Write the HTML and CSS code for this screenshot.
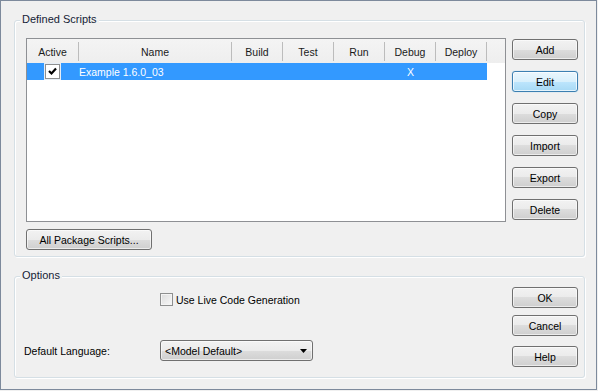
FILE: index.html
```html
<!DOCTYPE html>
<html lang="en">
<head>
    <meta charset="UTF-8">
    <meta name="viewport" content="width=device-width, initial-scale=1.0">
    <title>Scripts</title>
    <link rel="stylesheet" href="styles.css">
</head>
<body>
    <div class="dialog">
        <div class="group group-scripts">
            <span class="legend">Defined Scripts</span>
            <div class="scripts-body">
                <div class="scripts-main">
                    <div class="list">
                        <div class="list-head">
                            <div class="col">Active</div>
                            <div class="col">Name</div>
                            <div class="col">Build</div>
                            <div class="col">Test</div>
                            <div class="col">Run</div>
                            <div class="col">Debug</div>
                            <div class="col">Deploy</div>
                            <div class="col col-fill"></div>
                        </div>
                        <div class="list-row selected">
                            <div class="cell cell-center">
                                <span class="row-check">
                                    <svg width="9" height="9" viewBox="0 0 9 9"><path d="M1 4 L3.5 6.5 L8 1.5" fill="none" stroke="#000" stroke-width="2.2"/></svg>
                                </span>
                            </div>
                            <div class="cell cell-name">Example 1.6.0_03</div>
                            <div class="cell"></div>
                            <div class="cell"></div>
                            <div class="cell"></div>
                            <div class="cell cell-center">X</div>
                            <div class="cell"></div>
                        </div>
                    </div>
                    <button class="btn btn-wide">All Package Scripts...</button>
                </div>
                <div class="side-buttons">
                    <button class="btn">Add</button>
                    <button class="btn btn-default">Edit</button>
                    <button class="btn">Copy</button>
                    <button class="btn">Import</button>
                    <button class="btn">Export</button>
                    <button class="btn">Delete</button>
                </div>
            </div>
        </div>

        <div class="group group-options">
            <span class="legend">Options</span>
            <div class="options-body">
                <div class="options-main">
                    <label class="check-row">
                        <span class="check-box"></span>
                        <span>Use Live Code Generation</span>
                    </label>
                    <div class="lang-row">
                        <span class="lang-label">Default Language:</span>
                        <div class="combo">
                            <span>&lt;Model Default&gt;</span>
                            <svg class="combo-arrow" width="7" height="4" viewBox="0 0 7 4"><path d="M0 0 H7 L3.5 4 Z" fill="#000"/></svg>
                        </div>
                    </div>
                </div>
                <div class="side-buttons side-buttons-dialog">
                    <button class="btn">OK</button>
                    <button class="btn btn-cancel">Cancel</button>
                    <button class="btn btn-help">Help</button>
                </div>
            </div>
        </div>
    </div>
</body>
</html>
```

FILE: styles.css
```css
body {
    margin: 0;
    background-color: #f0f0f0;
    font-family: "Liberation Sans", Arial, sans-serif;
    font-size: 10.5px;
    color: #000000;
}
.dialog {
    box-sizing: border-box;
    width: 597px;
    height: 390px;
    border: 1px solid #7d8a9c;
    padding: 19px 0 0 13px;
    background-color: #f0f0f0;
}
.group {
    position: relative;
    box-sizing: border-box;
    width: 571px;
    border: 1px solid #d5dfe5;
    border-radius: 3px;
    box-shadow: inset 1px 1px 0 #ffffff, 1px 1px 0 #ffffff;
}
.legend {
    position: absolute;
    top: -8px;
    left: 5px;
    padding: 0 2px;
    line-height: 13px;
    font-size: 11px;
    background-color: #f0f0f0;
    color: #151c36;
}
.group-scripts {
    padding: 17px 6px 6px 11px;
}
.scripts-body, .options-body {
    display: flex;
    gap: 6px;
}
.scripts-main {
    display: flex;
    flex-direction: column;
    gap: 7px;
    width: 480px;
}
.list {
    box-sizing: border-box;
    height: 184px;
    border: 1px solid #8e9094;
    background-color: #ffffff;
}
.list-head {
    display: grid;
    grid-template-columns: 52px 153px 51px 51px 51px 51px 51px 1fr;
    height: 24px;
    background: linear-gradient(#f4f4f4, #eeeeee);
}
.col {
    display: flex;
    align-items: center;
    justify-content: center;
    border-right: 1px solid #bcbcbc;
    margin: 3px 0 2px 0;
    color: #1a1a1a;
}
.col-fill {
    border-right: none;
}
.list-row {
    display: grid;
    grid-template-columns: 52px 153px 51px 51px 51px 51px 51px;
    width: 460px;
    height: 17px;
}
.list-row.selected {
    background-color: #3399ff;
    color: #ffffff;
}
.cell {
    display: flex;
    align-items: center;
}
.cell-center {
    justify-content: center;
}
.row-check {
    box-sizing: border-box;
    display: flex;
    align-items: center;
    justify-content: center;
    width: 15px;
    height: 15px;
    margin-left: -1px;
    border: 1px solid #8e8f8f;
    background-color: #ffffff;
    box-shadow: 0 0 0 1px #e6eef6;
}
.cell-name {
    padding-left: 0;
}
.btn {
    box-sizing: border-box;
    width: 66px;
    height: 21px;
    padding: 0;
    border: 1px solid #707070;
    border-radius: 3px;
    background: linear-gradient(#f2f2f2 0%, #ebebeb 50%, #dddddd 50%, #cfcfcf 100%);
    box-shadow: inset 0 0 0 1px rgba(255, 255, 255, 0.6);
    font-family: "Liberation Sans", Arial, sans-serif;
    font-size: 10.5px;
    color: #000000;
}
.btn-default {
    border-color: #3c7fb1;
    background: linear-gradient(#eaf6fd 0%, #d9f0fc 50%, #bee6fd 50%, #a7d9f5 100%);
    box-shadow: inset 0 0 0 1px rgba(255, 255, 255, 0.7), 0 0 1px #6fc3f0;
}
.btn-wide {
    width: 126px;
}
.side-buttons {
    display: flex;
    flex-direction: column;
    gap: 11px;
    margin-top: 1px;
}
.group-options {
    margin-top: 19px;
    padding: 10px 6px 10px 9px;
}
.side-buttons-dialog {
    gap: 0;
    margin-top: 0;
}
.btn-cancel {
    margin-top: 7px;
}
.btn-help {
    margin-top: 10px;
}
.options-main {
    flex: 1;
    display: flex;
    flex-direction: column;
    justify-content: space-between;
    padding: 6px 0 6px 0;
}
.check-row {
    display: flex;
    align-items: center;
    gap: 3px;
    padding-left: 136px;
    height: 13px;
}
.check-box {
    box-sizing: border-box;
    width: 13px;
    height: 13px;
    border: 1px solid #8e8f8f;
    background: linear-gradient(135deg, #dcdcdc, #f8f8f8);
    box-shadow: inset 0 0 0 1px #f4f4f4;
}
.lang-row {
    display: flex;
    align-items: center;
}
.lang-label {
    width: 136px;
}
.combo {
    box-sizing: border-box;
    display: flex;
    align-items: center;
    justify-content: space-between;
    width: 153px;
    height: 21px;
    padding: 0 5px 0 4px;
    border: 1px solid #707070;
    border-radius: 3px;
    background: linear-gradient(#f2f2f2 0%, #ebebeb 50%, #dddddd 50%, #cfcfcf 100%);
    box-shadow: inset 0 0 0 1px rgba(255, 255, 255, 0.6);
}
```
